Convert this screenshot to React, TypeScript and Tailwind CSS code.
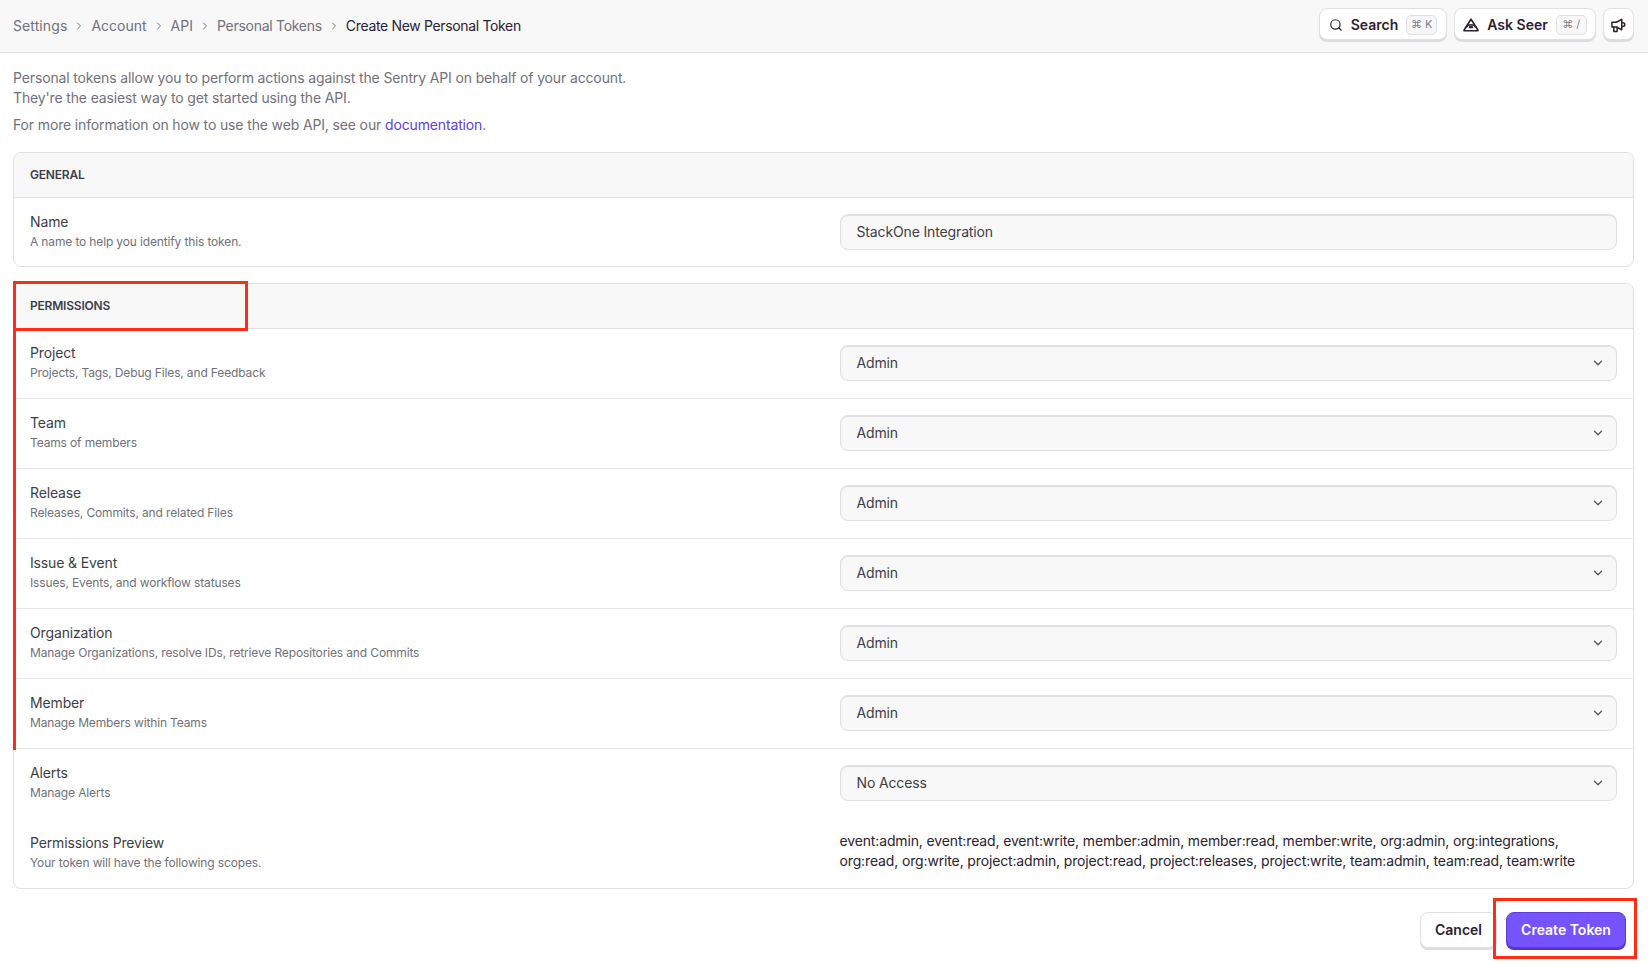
import { ChevronDown, ChevronRight, Search } from "lucide-react";

const crumbs = [
  { label: "Settings", className: "tracking-[0.1px]" },
  { label: "Account", className: "tracking-normal" },
  { label: "API", className: "tracking-normal" },
  { label: "Personal Tokens", className: "tracking-[-0.28px]" },
];

const permissions = [
  { name: "Project", help: "Projects, Tags, Debug Files, and Feedback", value: "Admin" },
  { name: "Team", help: "Teams of members", value: "Admin" },
  { name: "Release", help: "Releases, Commits, and related Files", value: "Admin" },
  { name: "Issue & Event", help: "Issues, Events, and workflow statuses", value: "Admin" },
  { name: "Organization", help: "Manage Organizations, resolve IDs, retrieve Repositories and Commits", value: "Admin" },
  { name: "Member", help: "Manage Members within Teams", value: "Admin" },
];

function SeerIcon() {
  return (
    <svg viewBox="0 0 16 14" className="h-[14px] w-4" fill="none" stroke="#2b2233" strokeWidth="1.6" strokeLinejoin="round">
      <path d="M8 1.2 14.9 12a.5.5 0 0 1-.4.8H1.5a.5.5 0 0 1-.4-.8Z" />
      <path d="M3 9.6C5 5.8 11 5.8 13 9.6" />
      <path d="M5.6 10.2a2.4 2.4 0 0 1 4.8 0Z" fill="#2b2233" stroke="none" />
    </svg>
  );
}

function MegaphoneIcon() {
  return (
    <svg viewBox="0 0 16 16" className="h-[15px] w-[15px]" fill="none" stroke="#2b2233" strokeWidth="1.6" strokeLinejoin="round" strokeLinecap="round">
      <path d="M1 4.5h4.5L11.5 1.5v11L5.5 9.5H1Z" />
      <path d="M11.5 5h1.2a2 2 0 0 1 0 4h-1.2" />
      <path d="M3 9.5V14.5H6.5V9.5" />
    </svg>
  );
}

function Kbd({ children }: { children: React.ReactNode }) {
  return (
    <span className="flex h-5 w-[31px] items-center justify-center gap-1 rounded-[5px] border border-[#dfdfe4] bg-[#f8f8f9] text-[11px] font-normal text-[#80808a]">
      {children}
    </span>
  );
}

function Row({ name, help, children, className }: { name: string; help: string; children: React.ReactNode; className: string }) {
  return (
    <div className={`flex items-center ${className}`}>
      <div className="w-1/2 pb-[3px] pl-4">
        <div className="text-sm leading-5 text-[#3e3e47]">{name}</div>
        <div className="mt-[2px] text-xs leading-4 text-[#71717c]">{help}</div>
      </div>
      <div className="w-1/2 px-4">{children}</div>
    </div>
  );
}

function Field({ value, select }: { value: string; select?: boolean }) {
  return (
    <div className={`flex h-9 items-center justify-between rounded-lg border border-[#e0e0e4] bg-[#f8f8f9] pl-4 pr-[11px] text-sm text-[#3e3e47] shadow-[inset_0_1px_0_#e0e0e4] ${select ? "mb-px" : ""}`}>
      <span>{value}</span>
      {select && <ChevronDown className="h-[14px] w-[14px] text-[#55555f]" strokeWidth={2.2} />}
    </div>
  );
}

function PanelHeader({ title }: { title: string }) {
  return (
    <div className="flex h-[45px] items-center rounded-t-lg border-b border-[#e0e0e4] bg-[#f8f8f9] pl-4 text-xs font-semibold uppercase tracking-[-0.2px] text-[#3e3e47]">
      {title}
    </div>
  );
}

export default function App() {
  return (
    <div className="relative h-[966px] overflow-hidden bg-white font-['Inter',sans-serif] tracking-[-0.14px]">
      <header className="flex h-[53px] items-center justify-between border-b border-[#e0e0e4] bg-[#f8f8f9] pl-[13px] pr-[14px]">
        <nav className="flex items-center text-sm text-[#71717c]">
          {crumbs.map((crumb) => (
            <span key={crumb.label} className={`flex items-center ${crumb.className}`}>
              {crumb.label}
              <ChevronRight className="mx-[6px] h-[12px] w-[12px] text-[#71717c]" />
            </span>
          ))}
          <span className="tracking-[-0.34px] text-[#2b2233]">Create New Personal Token</span>
        </nav>
        <div className="mb-[4px] flex items-center gap-[7px] tracking-normal">
          <button className="flex h-8 w-[128px] items-center justify-center gap-2 rounded-lg border border-[#e0e0e4] bg-white pt-[2px] text-sm font-semibold text-[#2b2233] shadow-[0_2px_0_#dbdbe0]">
            <Search className="h-[14px] w-[14px]" strokeWidth={2} />
            Search
            <Kbd>⌘ K</Kbd>
          </button>
          <button className="flex h-8 w-[142px] items-center justify-center gap-2 rounded-lg border border-[#e0e0e4] bg-white pt-[2px] text-sm font-semibold text-[#2b2233] shadow-[0_2px_0_#dbdbe0]">
            <SeerIcon />
            Ask Seer
            <Kbd>⌘ /</Kbd>
          </button>
          <button className="flex h-8 w-[31px] items-center justify-center rounded-lg border border-[#e0e0e4] bg-white pt-[2px] shadow-[0_2px_0_#dbdbe0]">
            <MegaphoneIcon />
          </button>
        </div>
      </header>

      <main className="pl-[13px] pr-[14px] pt-[15px]">
        <p className="text-sm leading-5 text-[#71717c]">
          Personal tokens allow you to perform actions against the Sentry API on behalf of your account.
          <br />
          They're the easiest way to get started using the API.
        </p>
        <p className="mt-[7px] text-sm leading-5 text-[#71717c]">
          For more information on how to use the web API, see our <a className="text-[#6040e0]">documentation</a>.
        </p>

        <section className="mt-[17px] rounded-lg border border-[#e0e0e4]">
          <PanelHeader title="General" />
          <Row name="Name" help="A name to help you identify this token." className="h-[68px]">
            <Field value="StackOne Integration" />
          </Row>
        </section>

        <section className="mt-[16px] rounded-lg border border-[#e0e0e4]">
          <PanelHeader title="Permissions" />
          {permissions.map((perm) => (
            <Row key={perm.name} name={perm.name} help={perm.help} className="h-[70px] border-b border-[#e9e9ec]">
              <Field value={perm.value} select />
            </Row>
          ))}
          <Row name="Alerts" help="Manage Alerts" className="h-[69px]">
            <Field value="No Access" select />
          </Row>
          <Row name="Permissions Preview" help="Your token will have the following scopes." className="h-[70px]">
            <div className="pb-[5px] text-sm leading-5 text-[#2b2233]">
              event:admin, event:read, event:write, member:admin, member:read, member:write, org:admin, org:integrations,
              <br />
              org:read, org:write, project:admin, project:read, project:releases, project:write, team:admin, team:read, team:write
            </div>
          </Row>
        </section>

        <div className="mt-[23px] flex justify-end gap-[9px] pr-2 tracking-normal">
          <button className="h-9 w-[77px] rounded-lg border border-[#e0e0e4] bg-white text-sm font-semibold text-[#2b2233] shadow-[0_2px_0_#dbdbe0]">
            Cancel
          </button>
          <button className="h-9 w-[120px] rounded-lg border border-[#5b3fd0] bg-[#7553ff] text-sm font-semibold text-white shadow-[0_2px_0_#5a30d0]">
            Create Token
          </button>
        </div>
      </main>

      {/* red review marks on top of the page */}
      <div className="absolute left-[13px] top-[281px] h-[50px] w-[235px] border-[3px] border-[#ff2d12]" />
      <div className="absolute left-[13px] top-[331px] h-[419px] w-[3px] bg-[#ff2d12]" />
      <div className="absolute left-[1493px] top-[898px] h-[61px] w-[144px] border-[3px] border-[#ff2d12]" />
    </div>
  );
}
